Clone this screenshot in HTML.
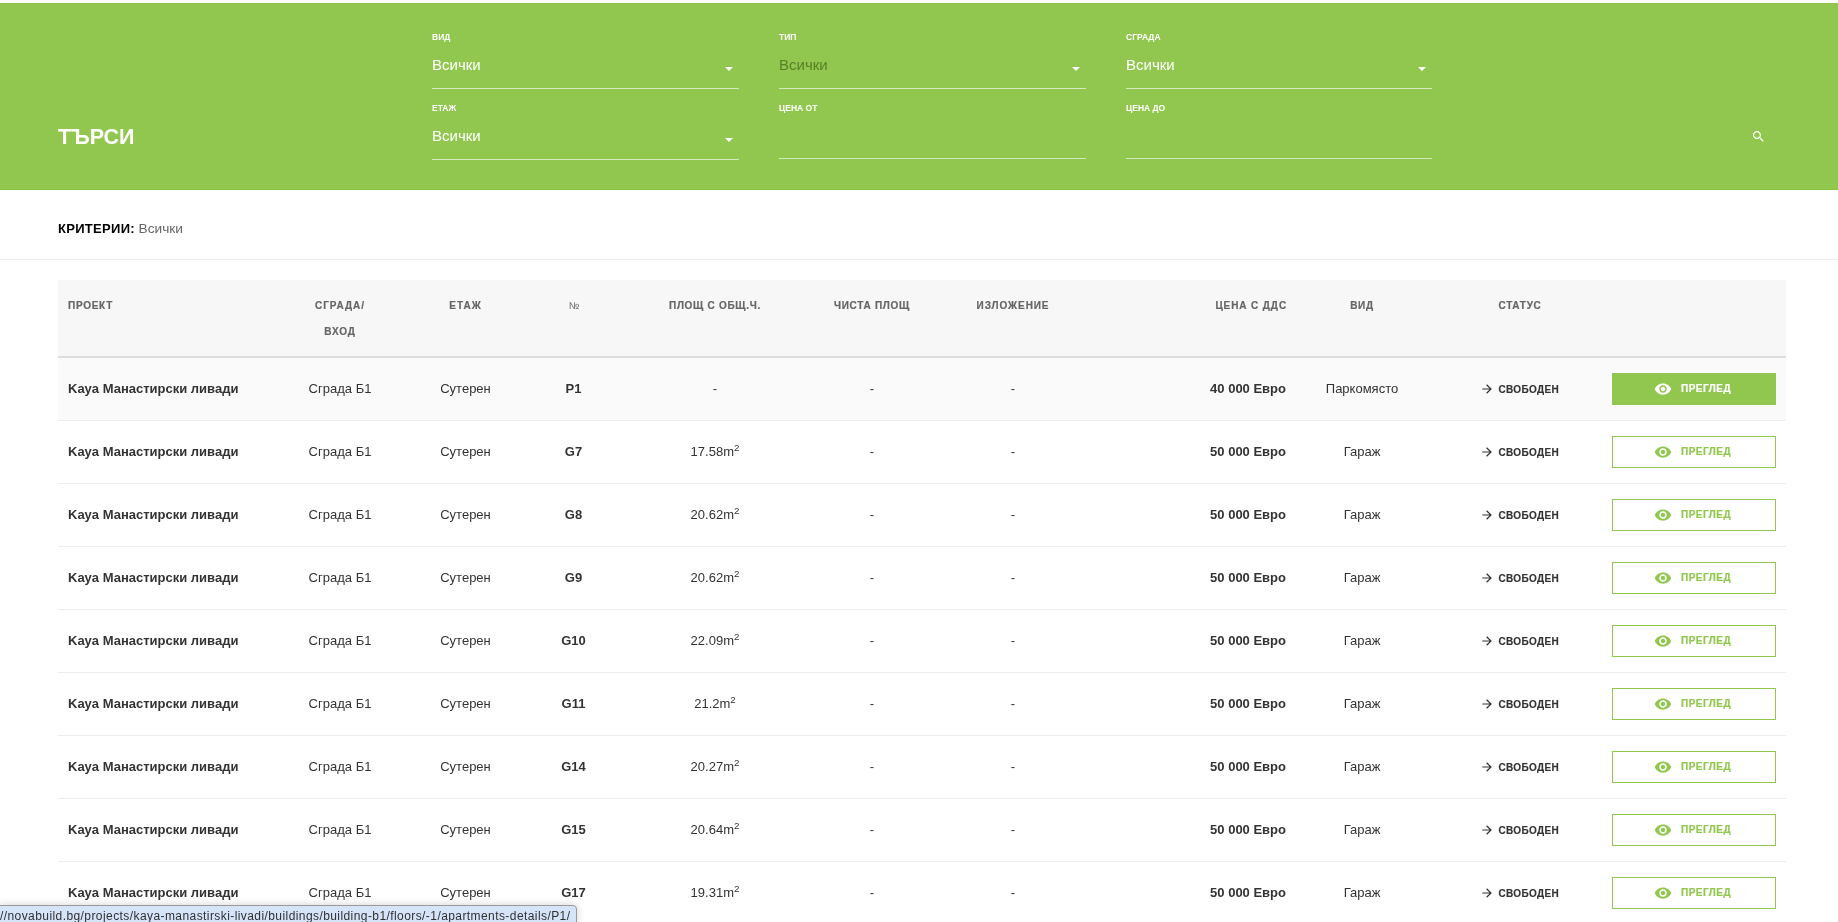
<!DOCTYPE html>
<html lang="bg"><head><meta charset="utf-8"><title>Търси</title>
<style>
*{box-sizing:border-box;margin:0;padding:0}
html,body{width:1838px;height:922px;overflow:hidden;background:#fff}
body{font-family:"Liberation Sans",Arial,sans-serif;color:#333;position:relative;will-change:transform}
.hdr{position:absolute;left:0;top:3px;width:1838px;height:187px;background:#92c74f;border-top:1px solid #8bc34a;border-bottom:1px solid #8bc34a}
.title{position:absolute;left:58px;top:122px;font-size:21.5px;font-weight:bold;color:#fff;line-height:30px;letter-spacing:-.05px}
.fld{position:absolute;width:307px;height:60px}
.fld label{position:absolute;left:0;top:0;font-size:8.5px;font-weight:bold;color:#fff;line-height:10px;letter-spacing:0}
.fld .val{position:absolute;left:0;top:23px;font-size:15px;color:#fff;line-height:20px}
.fld .val.dis{color:#577f28}
.fld .ln{position:absolute;left:0;width:307px;height:1px;background:rgba(255,255,255,.62);top:56px}
.fld.inp .ln{top:55px}
.fld .car{position:absolute;left:293px;top:35px;width:0;height:0;border-left:4px solid transparent;border-right:4px solid transparent;border-top:4px solid #fff}
.srch{position:absolute;left:1751px;top:129px;width:15px;height:15px;fill:#fff}
.crit{position:absolute;left:58px;top:220px;font-size:13px;line-height:18px;color:#666}
.crit span{font-size:13.7px}
.crit b{color:#000;letter-spacing:.3px}
.hr{position:absolute;left:0;top:259px;width:1838px;height:1px;background:#ececec}
table{position:absolute;left:58px;top:280px;width:1728px;border-collapse:collapse;table-layout:fixed}
th{background:#f7f7f7;font-size:10px;font-weight:bold;letter-spacing:.72px;color:#666;-webkit-text-stroke:.2px #666;vertical-align:top;padding:13px 10px 11px;line-height:26px;height:77px;border-bottom:2px solid #ddd;text-align:center}
th.c1{text-align:left}
th .no{font-weight:normal;-webkit-text-stroke:0;position:relative;left:1px}
th.pr{text-align:right;padding-right:9px}
td{height:63px;font-size:13px;text-align:center;vertical-align:middle;padding:0 10px;border-bottom:1px solid #ededed;color:#333;white-space:nowrap}
td.c1{text-align:left}
td.pr{text-align:right}
td b{font-weight:bold}
tr.hov td{background:#fafafa}
sup{font-size:9.75px;line-height:1;vertical-align:baseline;position:relative;top:-5px}
.st span{font-size:10px;font-weight:bold;letter-spacing:.33px;vertical-align:middle;color:#333;-webkit-text-stroke:.15px #333}
.arr{width:10px;height:10px;fill:none;stroke:#333;stroke-width:1.2;vertical-align:middle;margin-right:7.500px;position:relative;top:-1px;left:.5px}
td.bt{padding:0 10px 0 0}
.btn{display:flex;align-items:center;justify-content:center;width:164px;height:32px;border:1px solid #92c74f;color:#92c74f;font-size:10px;font-weight:bold;letter-spacing:.47px;padding-right:3px;-webkit-text-stroke:.2px}
.btn .eye{width:18px;height:18px;fill:#92c74f;margin-right:9px}
tr.hov .btn{background:#92c74f;color:#fff}
tr.hov .btn .eye{fill:#fff}
.status{position:absolute;left:-1px;top:905px;height:20px;width:578px;background:#d6e4fa;border:1px solid #9a9a9a;border-radius:0 4px 0 0;box-shadow:0 0 8px rgba(0,0,0,.18);font-size:12px;letter-spacing:.42px;line-height:16px;color:#303030;white-space:nowrap;padding:2px 0 0 0;overflow:hidden}
</style></head><body>
<div class="hdr"></div>
<div class="title">ТЪРСИ</div>
<div class="fld" style="left:432px;top:32px"><label>ВИД</label><div class="val">Всички</div><div class="car"></div><div class="ln"></div></div>
<div class="fld" style="left:779px;top:32px"><label>ТИП</label><div class="val dis">Всички</div><div class="car"></div><div class="ln"></div></div>
<div class="fld" style="left:1126px;top:32px"><label>СГРАДА</label><div class="val">Всички</div><div class="car" style="left:292px"></div><div class="ln" style="width:306px"></div></div>
<div class="fld" style="left:432px;top:103px"><label>ЕТАЖ</label><div class="val">Всички</div><div class="car"></div><div class="ln"></div></div>
<div class="fld inp" style="left:779px;top:103px"><label>ЦЕНА ОТ</label><div class="ln"></div></div>
<div class="fld inp" style="left:1126px;top:103px"><label>ЦЕНА ДО</label><div class="ln" style="width:306px"></div></div>
<svg class="srch" viewBox="0 0 24 24"><path d="M15.5 14h-.79l-.28-.27C15.41 12.590 16 11.110 16 9.500 16 5.910 13.090 3 9.500 3S3 5.910 3 9.500 5.910 16 9.500 16c1.610 0 3.090-.590 4.230-1.570l.27.28v.79l5 4.990L20.490 19l-4.990-5zm-6 0C7.010 14 5 11.990 5 9.500S7.010 5 9.500 5 14 7.010 14 9.500 11.990 14 9.500 14z"/></svg>
<div class="crit"><b>КРИТЕРИИ:</b> <span>Всички</span></div>
<div class="hr"></div>
<table>
<colgroup><col style="width:222px"><col style="width:120px"><col style="width:131px"><col style="width:85px"><col style="width:198px"><col style="width:116px"><col style="width:166px"><col style="width:200px"><col style="width:132px"><col style="width:184px"><col style="width:174px"></colgroup>
<thead><tr><th class="c1">ПРОЕКТ</th><th style="letter-spacing:.92px">СГРАДА/<br>ВХОД</th><th style="letter-spacing:1px">ЕТАЖ</th><th><span class="no">№</span></th><th>ПЛОЩ С ОБЩ.Ч.</th><th>ЧИСТА ПЛОЩ</th><th style="letter-spacing:.92px">ИЗЛОЖЕНИЕ</th><th class="pr" style="letter-spacing:.89px">ЦЕНА С ДДС</th><th>ВИД</th><th>СТАТУС</th><th></th></tr></thead>
<tbody>
<tr class="hov"><td class="c1"><b>Kaya Манастирски ливади</b></td><td>Сграда Б1</td><td>Сутерен</td><td><b>P1</b></td><td>-</td><td>-</td><td>-</td><td class="pr"><b>40 000 Евро</b></td><td>Паркомясто</td><td class="st"><svg class="arr" viewBox="0 0 10 10"><path d="M0.300 5H9M4.600 0.700L9 5L4.600 9.300"/></svg><span>СВОБОДЕН</span></td><td class="bt"><a class="btn"><svg class="eye" viewBox="0 0 24 24"><path d="M12 4.5C7 4.5 2.73 7.61 1 12c1.73 4.39 6 7.5 11 7.5s9.270-3.110 11-7.500c-1.730-4.390-6-7.500-11-7.500zM12 17c-2.760 0-5-2.240-5-5s2.240-5 5-5 5 2.240 5 5-2.240 5-5 5zm0-8c-1.660 0-3 1.340-3 3s1.340 3 3 3 3-1.340 3-3-1.340-3-3-3z"/></svg><span>ПРЕГЛЕД</span></a></td></tr>
<tr class=""><td class="c1"><b>Kaya Манастирски ливади</b></td><td>Сграда Б1</td><td>Сутерен</td><td><b>G7</b></td><td>17.58m<sup>2</sup></td><td>-</td><td>-</td><td class="pr"><b>50 000 Евро</b></td><td>Гараж</td><td class="st"><svg class="arr" viewBox="0 0 10 10"><path d="M0.300 5H9M4.600 0.700L9 5L4.600 9.300"/></svg><span>СВОБОДЕН</span></td><td class="bt"><a class="btn"><svg class="eye" viewBox="0 0 24 24"><path d="M12 4.5C7 4.5 2.73 7.61 1 12c1.73 4.39 6 7.5 11 7.5s9.270-3.110 11-7.500c-1.730-4.390-6-7.500-11-7.500zM12 17c-2.760 0-5-2.240-5-5s2.240-5 5-5 5 2.240 5 5-2.240 5-5 5zm0-8c-1.660 0-3 1.340-3 3s1.340 3 3 3 3-1.340 3-3-1.340-3-3-3z"/></svg><span>ПРЕГЛЕД</span></a></td></tr>
<tr class=""><td class="c1"><b>Kaya Манастирски ливади</b></td><td>Сграда Б1</td><td>Сутерен</td><td><b>G8</b></td><td>20.62m<sup>2</sup></td><td>-</td><td>-</td><td class="pr"><b>50 000 Евро</b></td><td>Гараж</td><td class="st"><svg class="arr" viewBox="0 0 10 10"><path d="M0.300 5H9M4.600 0.700L9 5L4.600 9.300"/></svg><span>СВОБОДЕН</span></td><td class="bt"><a class="btn"><svg class="eye" viewBox="0 0 24 24"><path d="M12 4.5C7 4.5 2.73 7.61 1 12c1.73 4.39 6 7.5 11 7.5s9.270-3.110 11-7.500c-1.730-4.390-6-7.500-11-7.500zM12 17c-2.760 0-5-2.240-5-5s2.240-5 5-5 5 2.240 5 5-2.240 5-5 5zm0-8c-1.660 0-3 1.340-3 3s1.340 3 3 3 3-1.340 3-3-1.340-3-3-3z"/></svg><span>ПРЕГЛЕД</span></a></td></tr>
<tr class=""><td class="c1"><b>Kaya Манастирски ливади</b></td><td>Сграда Б1</td><td>Сутерен</td><td><b>G9</b></td><td>20.62m<sup>2</sup></td><td>-</td><td>-</td><td class="pr"><b>50 000 Евро</b></td><td>Гараж</td><td class="st"><svg class="arr" viewBox="0 0 10 10"><path d="M0.300 5H9M4.600 0.700L9 5L4.600 9.300"/></svg><span>СВОБОДЕН</span></td><td class="bt"><a class="btn"><svg class="eye" viewBox="0 0 24 24"><path d="M12 4.5C7 4.5 2.73 7.61 1 12c1.73 4.39 6 7.5 11 7.5s9.270-3.110 11-7.500c-1.730-4.390-6-7.500-11-7.500zM12 17c-2.760 0-5-2.240-5-5s2.240-5 5-5 5 2.240 5 5-2.240 5-5 5zm0-8c-1.660 0-3 1.340-3 3s1.340 3 3 3 3-1.340 3-3-1.340-3-3-3z"/></svg><span>ПРЕГЛЕД</span></a></td></tr>
<tr class=""><td class="c1"><b>Kaya Манастирски ливади</b></td><td>Сграда Б1</td><td>Сутерен</td><td><b>G10</b></td><td>22.09m<sup>2</sup></td><td>-</td><td>-</td><td class="pr"><b>50 000 Евро</b></td><td>Гараж</td><td class="st"><svg class="arr" viewBox="0 0 10 10"><path d="M0.300 5H9M4.600 0.700L9 5L4.600 9.300"/></svg><span>СВОБОДЕН</span></td><td class="bt"><a class="btn"><svg class="eye" viewBox="0 0 24 24"><path d="M12 4.5C7 4.5 2.73 7.61 1 12c1.73 4.39 6 7.5 11 7.5s9.270-3.110 11-7.500c-1.730-4.390-6-7.500-11-7.500zM12 17c-2.760 0-5-2.240-5-5s2.240-5 5-5 5 2.240 5 5-2.240 5-5 5zm0-8c-1.660 0-3 1.340-3 3s1.340 3 3 3 3-1.340 3-3-1.340-3-3-3z"/></svg><span>ПРЕГЛЕД</span></a></td></tr>
<tr class=""><td class="c1"><b>Kaya Манастирски ливади</b></td><td>Сграда Б1</td><td>Сутерен</td><td><b>G11</b></td><td>21.2m<sup>2</sup></td><td>-</td><td>-</td><td class="pr"><b>50 000 Евро</b></td><td>Гараж</td><td class="st"><svg class="arr" viewBox="0 0 10 10"><path d="M0.300 5H9M4.600 0.700L9 5L4.600 9.300"/></svg><span>СВОБОДЕН</span></td><td class="bt"><a class="btn"><svg class="eye" viewBox="0 0 24 24"><path d="M12 4.5C7 4.5 2.73 7.61 1 12c1.73 4.39 6 7.5 11 7.5s9.270-3.110 11-7.500c-1.730-4.390-6-7.500-11-7.500zM12 17c-2.760 0-5-2.240-5-5s2.240-5 5-5 5 2.240 5 5-2.240 5-5 5zm0-8c-1.660 0-3 1.340-3 3s1.340 3 3 3 3-1.340 3-3-1.340-3-3-3z"/></svg><span>ПРЕГЛЕД</span></a></td></tr>
<tr class=""><td class="c1"><b>Kaya Манастирски ливади</b></td><td>Сграда Б1</td><td>Сутерен</td><td><b>G14</b></td><td>20.27m<sup>2</sup></td><td>-</td><td>-</td><td class="pr"><b>50 000 Евро</b></td><td>Гараж</td><td class="st"><svg class="arr" viewBox="0 0 10 10"><path d="M0.300 5H9M4.600 0.700L9 5L4.600 9.300"/></svg><span>СВОБОДЕН</span></td><td class="bt"><a class="btn"><svg class="eye" viewBox="0 0 24 24"><path d="M12 4.5C7 4.5 2.73 7.61 1 12c1.73 4.39 6 7.5 11 7.5s9.270-3.110 11-7.500c-1.730-4.390-6-7.500-11-7.500zM12 17c-2.760 0-5-2.240-5-5s2.240-5 5-5 5 2.240 5 5-2.240 5-5 5zm0-8c-1.660 0-3 1.340-3 3s1.340 3 3 3 3-1.340 3-3-1.340-3-3-3z"/></svg><span>ПРЕГЛЕД</span></a></td></tr>
<tr class=""><td class="c1"><b>Kaya Манастирски ливади</b></td><td>Сграда Б1</td><td>Сутерен</td><td><b>G15</b></td><td>20.64m<sup>2</sup></td><td>-</td><td>-</td><td class="pr"><b>50 000 Евро</b></td><td>Гараж</td><td class="st"><svg class="arr" viewBox="0 0 10 10"><path d="M0.300 5H9M4.600 0.700L9 5L4.600 9.300"/></svg><span>СВОБОДЕН</span></td><td class="bt"><a class="btn"><svg class="eye" viewBox="0 0 24 24"><path d="M12 4.5C7 4.5 2.73 7.61 1 12c1.73 4.39 6 7.5 11 7.5s9.270-3.110 11-7.500c-1.730-4.390-6-7.500-11-7.500zM12 17c-2.760 0-5-2.240-5-5s2.240-5 5-5 5 2.240 5 5-2.240 5-5 5zm0-8c-1.660 0-3 1.340-3 3s1.340 3 3 3 3-1.340 3-3-1.340-3-3-3z"/></svg><span>ПРЕГЛЕД</span></a></td></tr>
<tr class=""><td class="c1"><b>Kaya Манастирски ливади</b></td><td>Сграда Б1</td><td>Сутерен</td><td><b>G17</b></td><td>19.31m<sup>2</sup></td><td>-</td><td>-</td><td class="pr"><b>50 000 Евро</b></td><td>Гараж</td><td class="st"><svg class="arr" viewBox="0 0 10 10"><path d="M0.300 5H9M4.600 0.700L9 5L4.600 9.300"/></svg><span>СВОБОДЕН</span></td><td class="bt"><a class="btn"><svg class="eye" viewBox="0 0 24 24"><path d="M12 4.5C7 4.5 2.73 7.61 1 12c1.73 4.39 6 7.5 11 7.5s9.270-3.110 11-7.500c-1.730-4.390-6-7.500-11-7.500zM12 17c-2.760 0-5-2.240-5-5s2.240-5 5-5 5 2.240 5 5-2.240 5-5 5zm0-8c-1.660 0-3 1.340-3 3s1.340 3 3 3 3-1.340 3-3-1.340-3-3-3z"/></svg><span>ПРЕГЛЕД</span></a></td></tr>
</tbody></table>
<div class="status">//novabuild.bg/projects/kaya-manastirski-livadi/buildings/building-b1/floors/-1/apartments-details/P1/</div>
</body></html>
